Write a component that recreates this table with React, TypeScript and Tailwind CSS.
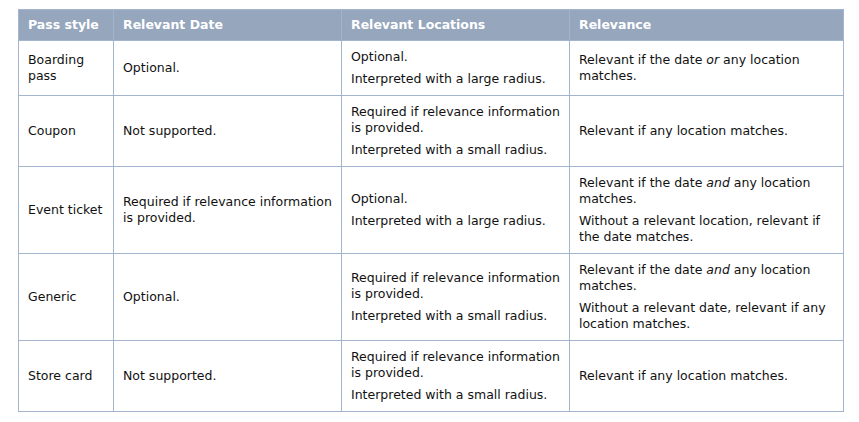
import React from 'react';

type Row = {
  style: React.ReactNode;
  date: React.ReactNode[];
  locations: React.ReactNode[];
  relevance: React.ReactNode[];
};

const rows: Row[] = [
  {
    style: 'Boarding pass',
    date: ['Optional.'],
    locations: ['Optional.', 'Interpreted with a large radius.'],
    relevance: [
      <>
        Relevant if the date <em>or</em> any location matches.
      </>,
    ],
  },
  {
    style: 'Coupon',
    date: ['Not supported.'],
    locations: ['Required if relevance information is provided.', 'Interpreted with a small radius.'],
    relevance: ['Relevant if any location matches.'],
  },
  {
    style: 'Event ticket',
    date: ['Required if relevance information is provided.'],
    locations: ['Optional.', 'Interpreted with a large radius.'],
    relevance: [
      <>
        Relevant if the date <em>and</em> any location matches.
      </>,
      'Without a relevant location, relevant if the date matches.',
    ],
  },
  {
    style: 'Generic',
    date: ['Optional.'],
    locations: ['Required if relevance information is provided.', 'Interpreted with a small radius.'],
    relevance: [
      <>
        Relevant if the date <em>and</em> any location matches.
      </>,
      'Without a relevant date, relevant if any location matches.',
    ],
  },
  {
    style: 'Store card',
    date: ['Not supported.'],
    locations: ['Required if relevance information is provided.', 'Interpreted with a small radius.'],
    relevance: ['Relevant if any location matches.'],
  },
];

// cell with stacked paragraphs
const Cell = ({ items }: { items: React.ReactNode[] }) => (
  <td className="border border-[#a3b5cc] px-[9px] py-[8px] align-middle">
    <div className="flex flex-col gap-[6px]">
      {items.map((item, i) => (
        <p key={i}>{item}</p>
      ))}
    </div>
  </td>
);

export default function App() {
  return (
    <div className="min-h-screen bg-white pl-[18px] pt-[9px] font-['DejaVu_Sans',sans-serif] text-[12.5px] leading-[16px] text-[#111]">
      <table className="w-[825px] table-fixed border-collapse border border-[#9aa9ba]">
        <colgroup>
          <col className="w-[95px]" />
          <col className="w-[228px]" />
          <col className="w-[228px]" />
          <col className="w-[274px]" />
        </colgroup>
        <thead>
          <tr className="h-[31px] bg-[#95a6bd] text-left font-bold text-white">
            <th className="border border-[#a3b5cc] px-[9px]">Pass style</th>
            <th className="border border-[#a3b5cc] px-[9px]">Relevant Date</th>
            <th className="border border-[#a3b5cc] px-[9px]">Relevant Locations</th>
            <th className="border border-[#a3b5cc] px-[9px]">Relevance</th>
          </tr>
        </thead>
        <tbody>
          {rows.map((row, i) => (
            <tr key={i}>
              <td className="border border-[#a3b5cc] px-[9px] py-[8px] align-middle">{row.style}</td>
              <Cell items={row.date} />
              <Cell items={row.locations} />
              <Cell items={row.relevance} />
            </tr>
          ))}
        </tbody>
      </table>
    </div>
  );
}
